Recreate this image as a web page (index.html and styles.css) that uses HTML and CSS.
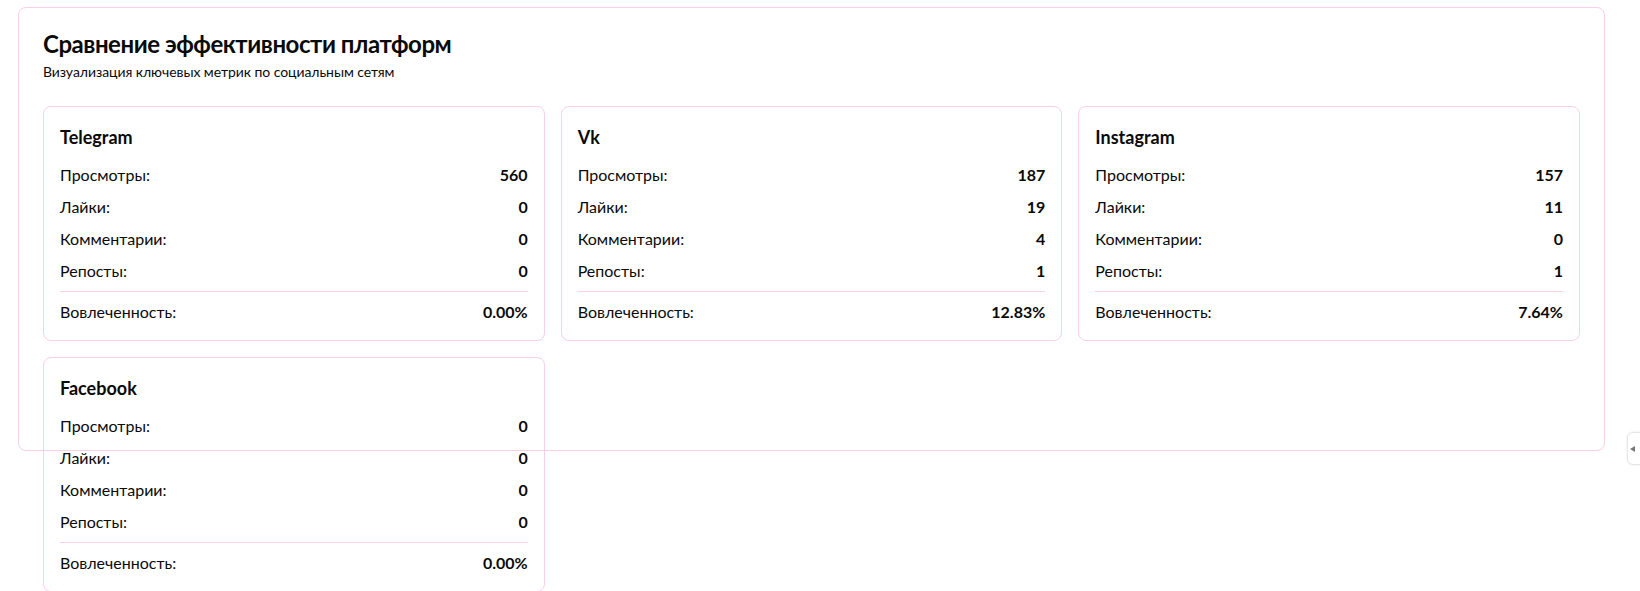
FILE: index.html
```html
<!DOCTYPE html>
<html lang="ru">
<head>
<meta charset="utf-8">
<title>Сравнение эффективности платформ</title>
<link rel="stylesheet" href="styles.css">
</head>
<body>
<main class="page">
  <section class="panel">
    <header class="panel-header">
      <h2 class="panel-title">Сравнение эффективности платформ</h2>
      <p class="panel-desc">Визуализация ключевых метрик по социальным сетям</p>
    </header>
    <div class="grid">
      <article class="platform">
        <h3 class="platform-name">Telegram</h3>
        <div class="rows">
          <div class="row"><span>Просмотры:</span><span class="val">560</span></div>
          <div class="row"><span>Лайки:</span><span class="val">0</span></div>
          <div class="row"><span>Комментарии:</span><span class="val">0</span></div>
          <div class="row"><span>Репосты:</span><span class="val">0</span></div>
          <div class="row total"><span>Вовлеченность:</span><span class="val">0.00%</span></div>
        </div>
      </article>
      <article class="platform">
        <h3 class="platform-name">Vk</h3>
        <div class="rows">
          <div class="row"><span>Просмотры:</span><span class="val">187</span></div>
          <div class="row"><span>Лайки:</span><span class="val">19</span></div>
          <div class="row"><span>Комментарии:</span><span class="val">4</span></div>
          <div class="row"><span>Репосты:</span><span class="val">1</span></div>
          <div class="row total"><span>Вовлеченность:</span><span class="val">12.83%</span></div>
        </div>
      </article>
      <article class="platform">
        <h3 class="platform-name">Instagram</h3>
        <div class="rows">
          <div class="row"><span>Просмотры:</span><span class="val">157</span></div>
          <div class="row"><span>Лайки:</span><span class="val">11</span></div>
          <div class="row"><span>Комментарии:</span><span class="val">0</span></div>
          <div class="row"><span>Репосты:</span><span class="val">1</span></div>
          <div class="row total"><span>Вовлеченность:</span><span class="val">7.64%</span></div>
        </div>
      </article>
      <article class="platform">
        <h3 class="platform-name">Facebook</h3>
        <div class="rows">
          <div class="row"><span>Просмотры:</span><span class="val">0</span></div>
          <div class="row"><span>Лайки:</span><span class="val">0</span></div>
          <div class="row"><span>Комментарии:</span><span class="val">0</span></div>
          <div class="row"><span>Репосты:</span><span class="val">0</span></div>
          <div class="row total"><span>Вовлеченность:</span><span class="val">0.00%</span></div>
        </div>
      </article>
    </div>
  </section>
</main>
<div class="side-tab"><span class="side-arrow"></span></div>
</body>
</html>
```
FILE: styles.css
```css
* { box-sizing: border-box; }
html, body { margin: 0; padding: 0; background: #fff; }
body {
  font-family: "Lato", "Noto Sans", sans-serif;
  color: #0a0a0a;
  width: 1640px;
  height: 591px;
  overflow: hidden;
}
.page {
  padding: 7px 35px 0 18px;
}
.panel {
  width: 1587px;
  height: 444px;
  border: 1px solid #fbcfe8;
  border-radius: 8px;
  background: #fff;
}
.panel-header {
  display: flex;
  flex-direction: column;
  gap: 6px;
  padding: 24px;
}
.panel-title {
  margin: 0;
  font-size: 24px;
  line-height: 24px;
  font-weight: 700;
  letter-spacing: -0.45px;
}
.panel-desc {
  margin: 0;
  font-size: 14px;
  line-height: 20px;
  letter-spacing: -0.06px;
}
.grid {
  display: grid;
  grid-template-columns: repeat(3, 1fr);
  gap: 16px;
  padding: 0 24px;
}
.platform {
  border: 1px solid #fbcfe8;
  border-radius: 8px;
  padding: 16px;
}
.platform-name {
  margin: 0 0 12px;
  font-size: 18px;
  line-height: 28px;
  font-weight: 700;
}
.rows {
  display: flex;
  flex-direction: column;
  gap: 8px;
}
.row {
  display: flex;
  justify-content: space-between;
  font-size: 16px;
  line-height: 24px;
}
.val { font-weight: 700; }
.row.total {
  border-top: 1px solid #fbcfe8;
  padding-top: 8px;
}
.side-tab {
  position: fixed;
  left: 1627px;
  top: 432px;
  width: 20px;
  height: 33px;
  background: #fff;
  border: 1px solid #e6e6e6;
  border-radius: 6px 0 0 6px;
  box-shadow: 0 0 3px rgba(0,0,0,0.08);
}
.side-arrow {
  position: absolute;
  left: 2px;
  top: 13px;
  width: 0;
  height: 0;
  border-top: 3px solid transparent;
  border-bottom: 3px solid transparent;
  border-right: 5px solid #777;
}
```
